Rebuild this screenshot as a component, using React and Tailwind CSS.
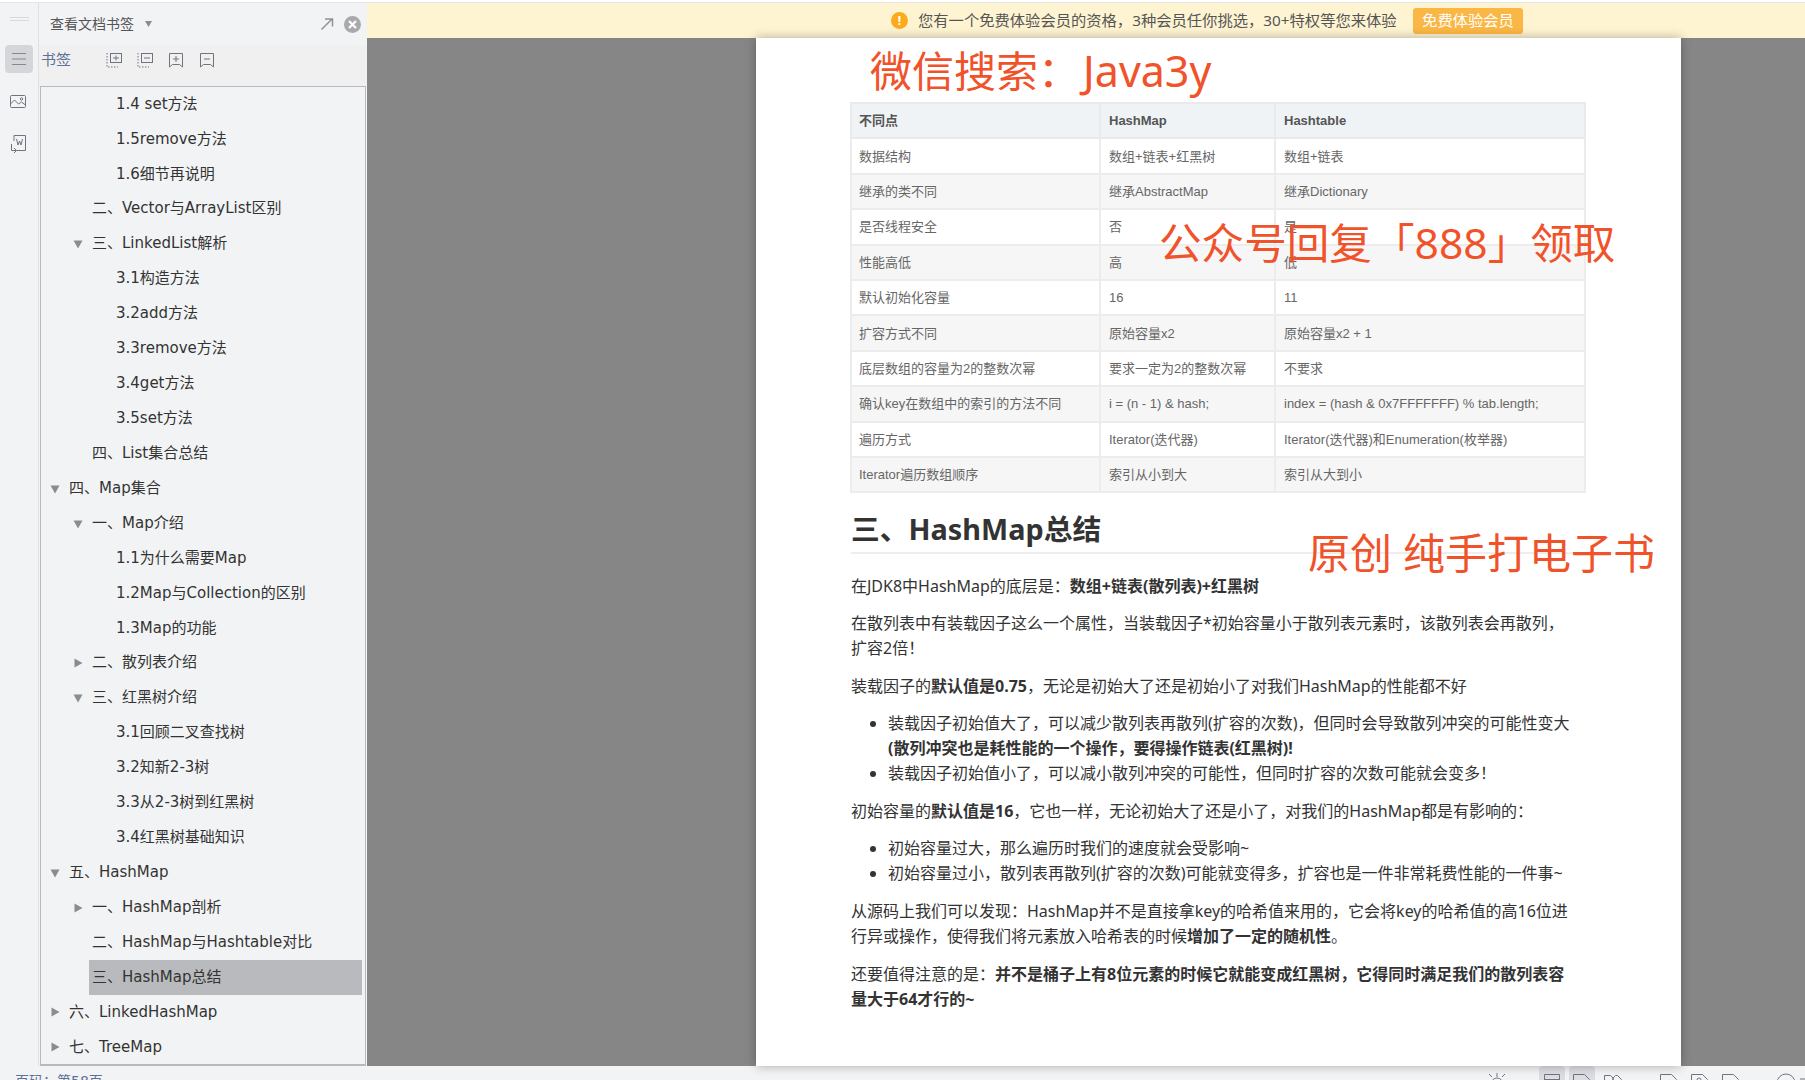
import React from 'react';

const bookmarks = [
    { level: 2, text: '1.4 set方法' },
    { level: 2, text: '1.5remove方法' },
    { level: 2, text: '1.6细节再说明' },
    { level: 1, text: '二、Vector与ArrayList区别' },
    { level: 1, caret: 'down', text: '三、LinkedList解析' },
    { level: 2, text: '3.1构造方法' },
    { level: 2, text: '3.2add方法' },
    { level: 2, text: '3.3remove方法' },
    { level: 2, text: '3.4get方法' },
    { level: 2, text: '3.5set方法' },
    { level: 1, text: '四、List集合总结' },
    { level: 0, caret: 'down', text: '四、Map集合' },
    { level: 1, caret: 'down', text: '一、Map介绍' },
    { level: 2, text: '1.1为什么需要Map' },
    { level: 2, text: '1.2Map与Collection的区别' },
    { level: 2, text: '1.3Map的功能' },
    { level: 1, caret: 'right', text: '二、散列表介绍' },
    { level: 1, caret: 'down', text: '三、红黑树介绍' },
    { level: 2, text: '3.1回顾二叉查找树' },
    { level: 2, text: '3.2知新2-3树' },
    { level: 2, text: '3.3从2-3树到红黑树' },
    { level: 2, text: '3.4红黑树基础知识' },
    { level: 0, caret: 'down', text: '五、HashMap' },
    { level: 1, caret: 'right', text: '一、HashMap剖析' },
    { level: 1, text: '二、HashMap与Hashtable对比' },
    { level: 1, text: '三、HashMap总结', selected: true },
    { level: 0, caret: 'right', text: '六、LinkedHashMap' },
    { level: 0, caret: 'right', text: '七、TreeMap' },
];

const indents = { 0: 'w-[10px]', 1: 'w-[33px]', 2: 'w-[57px]' };

const tableRows = [
    ['数据结构', '数组+链表+红黑树', '数组+链表'],
    ['继承的类不同', '继承AbstractMap', '继承Dictionary'],
    ['是否线程安全', '否', '是'],
    ['性能高低', '高', '低'],
    ['默认初始化容量', '16', '11'],
    ['扩容方式不同', '原始容量x2', '原始容量x2 + 1'],
    ['底层数组的容量为2的整数次幂', '要求一定为2的整数次幂', '不要求'],
    ['确认key在数组中的索引的方法不同', 'i = (n - 1) & hash;', 'index = (hash & 0x7FFFFFFF) % tab.length;'],
    ['遍历方式', 'Iterator(迭代器)', 'Iterator(迭代器)和Enumeration(枚举器)'],
    ['Iterator遍历数组顺序', '索引从小到大', '索引从大到小'],
];

const Caret = ({ dir }) => (
    <svg width="10" height="10" viewBox="0 0 10 10" className="-ml-px fill-[#8c8c8c]">
        {dir === 'down' ? <path d="M0.5 1.5h9L5 9.5z" /> : <path d="M1.5 0.5v9L9.5 5z" />}
    </svg>
);

const Icon = ({ children, className = '', w = 18, h = 18 }) => (
    <svg width={w} height={h} viewBox={`0 0 ${w} ${h}`} fill="none" stroke="#6f7480" strokeWidth="1" className={className}>
        {children}
    </svg>
);

const Sidebar = () => (
    <aside className="w-[367px] shrink-0 flex bg-[#f2f3f5]">
        <div className="w-[39px] shrink-0 border-r border-[#dfe0e3] flex flex-col items-center">
            <div className="mt-[14px] w-[19px] h-[4px] border-y border-[#d8d9dc]" />
            <div className="mt-[24px] w-[28px] h-[28px] rounded-[4px] bg-[#d5d6d9] flex items-center justify-center">
                <Icon w={16} h={14}>
                    <path d="M1 1.5h14M1 7h14M1 12.5h14" stroke="#85888f" />
                </Icon>
            </div>
            <div className="mt-[19px] -ml-[3px]">
                <Icon>
                    <rect x="1.5" y="3.5" width="15" height="12" rx="1" />
                    <path d="M1.5 12l4-4 4 4 3-2 4 3" />
                    <circle cx="12.5" cy="7" r="1.2" />
                </Icon>
            </div>
            <div className="mt-[23px] -ml-[3px]">
                <Icon w={20} h={20}>
                    <path d="M6 8V2.500h11.500v15H9" />
                    <path d="M8.500 6l1.500 6 1.500-4 1.500 4 1.500-6" />
                    <path d="M3.500 11v6.500h5M6 15l2.500 2.500L6 20" />
                </Icon>
            </div>
        </div>

        <div className="flex-1 min-w-0 flex flex-col">
            <div className="h-[42px] shrink-0 flex items-center pl-[11px] pr-[6px] text-[14px] text-[#555]">
                <span>查看文档书签</span>
                <svg width="7" height="6" viewBox="0 0 7 6" className="ml-[11px] fill-[#8c8c8c]"><path d="M0 0h7L3.500 6z" /></svg>
                <svg width="14" height="14" viewBox="0 0 14 14" fill="none" stroke="#939393" strokeWidth="1.500" className="ml-auto">
                    <path d="M1.500 12.500L12 2M5 2h7.500v7.500" />
                </svg>
                <span className="ml-[10px] w-[17px] h-[17px] rounded-full bg-[#a9a9ab] flex items-center justify-center">
                    <svg width="9" height="9" viewBox="0 0 9 9" stroke="#fff" strokeWidth="2.200"><path d="M1 1l7 7M8 1L1 8" /></svg>
                </span>
            </div>
            <div className="h-[41px] shrink-0 bg-[#f0f0f0] flex pt-[2px] pl-[2px] text-[15px] text-[#5d7196]">
                <span className="w-[65px] leading-[26px]">书签</span>
                <div className="flex gap-[15px] pt-[5px]">
                    <Icon w={16} h={16}>
                        <path d="M1 1v14h11" strokeDasharray="1.500 1.500" />
                        <rect x="4.500" y="1.500" width="11" height="9" />
                        <path d="M7 6h6M10 3.500v5" />
                    </Icon>
                    <Icon w={16} h={16}>
                        <path d="M1 1v14h11" strokeDasharray="1.500 1.500" />
                        <rect x="4.500" y="1.500" width="11" height="9" />
                        <path d="M7 6h6" />
                    </Icon>
                    <Icon w={16} h={16}>
                        <path d="M1.500 1.500h13v13.500l-3-2.500h-7l-3 2.500z" />
                        <path d="M5 7h6M8 4v6" />
                    </Icon>
                    <Icon w={16} h={16}>
                        <path d="M1.500 1.500h13v13.500l-3-2.500h-7l-3 2.500z" />
                        <path d="M5 7h6" />
                    </Icon>
                </div>
            </div>
            <div className="h-[980px] shrink-0 w-[326px] ml-px border border-[#b9b9b9] border-b-2 text-[15px] text-[#333] pr-[3px]">
                {bookmarks.map((b) => (
                    <div key={b.text} className="h-[34.93px] flex items-center">
                        <div className={`${indents[b.level]} shrink-0`} />
                        <div className="w-[15px] shrink-0 flex items-center">
                            {b.caret && <Caret dir={b.caret} />}
                        </div>
                        <div className={`flex-1 h-full flex items-center pl-[3px] pb-px whitespace-nowrap ${b.selected ? 'bg-[#b9babd]' : ''}`}>
                            {b.text}
                        </div>
                    </div>
                ))}
            </div>
        </div>
    </aside>
);

const Banner = () => (
    <div className="h-[35px] shrink-0 bg-[#fef4d2] flex items-center pl-[524px] text-[15.300px] text-[#555]">
        <span className="w-[17px] h-[17px] rounded-full bg-[#fbab1d] flex items-center justify-center text-white text-[12px] font-bold leading-none">!</span>
        <span className="ml-[10px] w-[479px] whitespace-nowrap">您有一个免费体验会员的资格，3种会员任你挑选，30+特权等您来体验</span>
        <button className="ml-[16px] w-[110px] h-[26px] rounded-[3px] bg-[#fbb745] text-[#fff] text-[15.300px]">免费体验会员</button>
    </div>
);

const HashTable = () => (
    <table className="w-[736px] table-fixed border-collapse text-[13px] text-[#666] font-['Liberation_Sans','Noto_Sans_CJK_SC',sans-serif]">
        <thead>
            <tr className="h-[35.400px] bg-[#f0f3f6] text-[#555] font-bold">
                <th className="w-[249px] border-2 border-[#e9eaec] pl-[7px] text-left">不同点</th>
                <th className="w-[175px] border-2 border-[#e9eaec] pl-[8px] text-left">HashMap</th>
                <th className="border-2 border-[#e9eaec] pl-[8px] text-left">Hashtable</th>
            </tr>
        </thead>
        <tbody>
            {tableRows.map((row, i) => (
                <tr key={row[0]} className={`h-[35.400px] ${i % 2 === 1 ? 'bg-[#f6f6f6]' : 'bg-white'}`}>
                    <td className="border-2 border-[#ececec] pl-[7px] whitespace-nowrap">{row[0]}</td>
                    <td className="border-2 border-[#ececec] pl-[8px] whitespace-nowrap">{row[1]}</td>
                    <td className="border-2 border-[#ececec] pl-[8px] whitespace-nowrap">{row[2]}</td>
                </tr>
            ))}
        </tbody>
    </table>
);

const Doc = () => (
    <main className="relative ml-[389px] w-[925px] flex-1 min-h-0 bg-white overflow-hidden shadow-[0_0_10px_rgba(0,0,0,0.3)] pl-[94px] pt-[64px] text-[16px] leading-[25px] text-[#333]">
        <HashTable />

        <h2 className="mt-[15px] ml-px pb-[4px] w-[734px] h-[46px] border-b-2 border-[#eeeeee] text-[28.800px] leading-[42px] font-bold text-[#333]">三、HashMap总结</h2>

        <div className="w-[725px] ml-px mt-[19.500px]">
            <p className="mb-[12.500px]">在JDK8中HashMap的底层是：<b>数组+链表(散列表)+红黑树</b></p>
            <p className="mb-[12.500px]">在散列表中有装载因子这么一个属性，当装载因子*初始容量小于散列表元素时，该散列表会再散列，扩容2倍！</p>
            <p className="mb-[12.500px]">装载因子的<b>默认值是0.75</b>，无论是初始大了还是初始小了对我们HashMap的性能都不好</p>
            <ul className="mb-[12.500px] list-disc pl-[37px]">
                <li className="whitespace-nowrap">装载因子初始值大了，可以减少散列表再散列(扩容的次数)，但同时会导致散列冲突的可能性变大<br /><b>(散列冲突也是耗性能的一个操作，要得操作链表(红黑树)!</b></li>
                <li>装载因子初始值小了，可以减小散列冲突的可能性，但同时扩容的次数可能就会变多！</li>
            </ul>
            <p className="mb-[12.500px]">初始容量的<b>默认值是16</b>，它也一样，无论初始大了还是小了，对我们的HashMap都是有影响的：</p>
            <ul className="mb-[12.500px] list-disc pl-[37px]">
                <li>初始容量过大，那么遍历时我们的速度就会受影响~</li>
                <li>初始容量过小，散列表再散列(扩容的次数)可能就变得多，扩容也是一件非常耗费性能的一件事~</li>
            </ul>
            <p className="mb-[13px]">从源码上我们可以发现：HashMap并不是直接拿key的哈希值来用的，它会将key的哈希值的高16位进行异或操作，使得我们将元素放入哈希表的时候<b>增加了一定的随机性</b>。</p>
            <p>还要值得注意的是：<b>并不是桶子上有8位元素的时候它就能变成红黑树，它得同时满足我们的散列表容量大于64才行的~</b></p>
        </div>

        <span className="absolute left-[114px] top-[3px] text-[42px] leading-[60px] text-[#f0522a] whitespace-nowrap">微信搜索：<span className="ml-[3px] text-[43px]">Java3y</span></span>
        <span className="absolute left-[403px] top-[174px] text-[42.600px] leading-[60px] text-[#f0522a] whitespace-nowrap">公众号回复「888」领取</span>
        <span className="absolute left-[552px] top-[485px] text-[42px] leading-[60px] text-[#f0522a] whitespace-nowrap">原创 纯手打电子书</span>
    </main>
);

const StatusBar = () => (
    <div className="h-[14px] shrink-0 bg-[#f2f3f5] flex items-start overflow-hidden text-[14px] leading-[20px] text-[#5d7196]">
        <span className="ml-[15px] mt-[5px] whitespace-nowrap">页码：第58页</span>
        <Icon w={20} h={14} className="ml-[1384px] mt-[7px] shrink-0">
            <path d="M10 0v4M2 1l3 3M18 1l-3 3M4 11a6 6 0 0 1 12 0" />
        </Icon>
        <div className="ml-[32px] w-[26px] h-[20px] rounded-[4px] bg-[#dcdde2] shrink-0 flex justify-center pt-[8px]">
            <Icon w={16} h={12}><path d="M0.500 6V0.500h15V6M0.500 5.500h15" /></Icon>
        </div>
        <div className="ml-[4px] w-[26px] h-[20px] rounded-[4px] bg-[#dcdde2] shrink-0 flex justify-center pt-[8px]">
            <Icon w={17} h={12}><path d="M0.500 12V0.500h11l5 5V12" /></Icon>
        </div>
        <Icon w={18} h={12} className="ml-[9px] mt-[8px] shrink-0"><path d="M0.500 12V1.500h6L9 4v8M9 12V4l2.500-2.500h2l4 4V12" /></Icon>
        <Icon w={17} h={12} className="ml-[38px] mt-[8px] shrink-0"><path d="M0.500 12V0.500h11l5 5V12M5 10h7" /></Icon>
        <Icon w={17} h={12} className="ml-[14px] mt-[8px] shrink-0"><path d="M0.500 12V0.500h11l5 5V12" /><circle cx="8" cy="6" r="2" /></Icon>
        <Icon w={17} h={12} className="ml-[14px] mt-[8px] shrink-0"><path d="M0.500 12V0.500h11l5 5V12" /></Icon>
        <Icon w={20} h={14} className="ml-[37px] mt-[7px] shrink-0"><circle cx="10" cy="10" r="9" /></Icon>
        <div className="ml-[4px] mt-[12px] w-[9px] h-[2px] bg-[#b0b2b7] shrink-0" />
    </div>
);

export default function App() {
    return (
        <div className="w-[1805px] h-[1080px] overflow-hidden flex flex-col bg-[#868686] font-['DejaVu_Sans','Noto_Sans_CJK_SC',sans-serif]">
            <div className="h-[3px] shrink-0 bg-white border-b border-[#e4e5e9]" />
            <div className="flex-1 min-h-0 flex">
                <Sidebar />
                <div className="flex-1 min-w-0 flex flex-col font-['Noto_Sans','Noto_Sans_CJK_SC',sans-serif]">
                    <Banner />
                    <Doc />
                </div>
            </div>
            <StatusBar />
        </div>
    );
}
